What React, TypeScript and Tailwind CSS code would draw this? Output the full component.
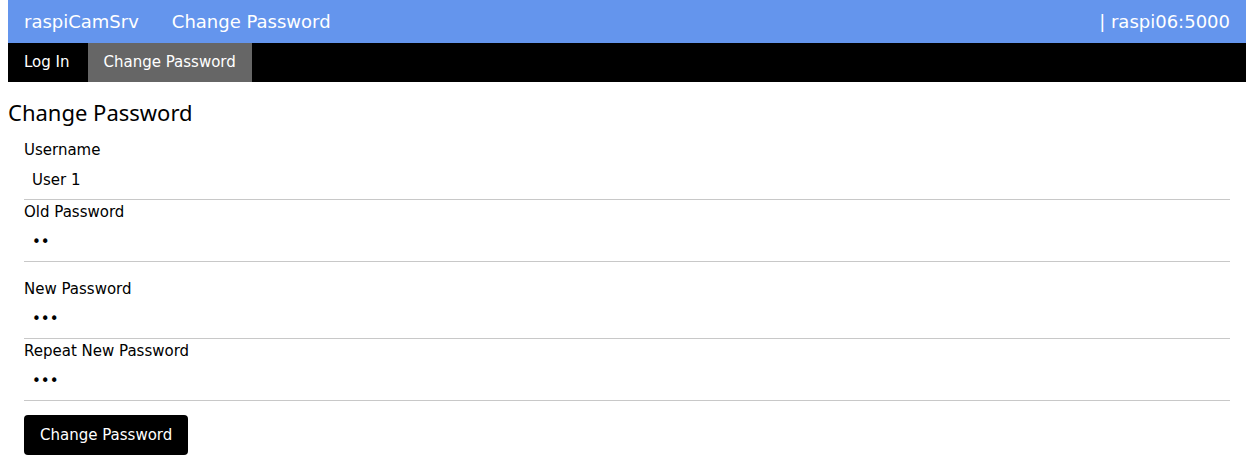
import React from 'react';

const verdana = { fontFamily: '"DejaVu Sans", Verdana, sans-serif' };

const fields = [
  { label: 'Username', value: 'User 1', type: 'text', spacer: 'mt-[2px]' },
  { label: 'Old Password', value: 'ab', type: 'password', spacer: 'mt-[2px]' },
  { label: 'New Password', value: 'abc', type: 'password', spacer: 'mt-[17px]' },
  { label: 'Repeat New Password', value: 'abc', type: 'password', spacer: 'mt-[2px]' },
];

const App: React.FC = () => {
  return (
    <div className="min-h-screen bg-white pl-2 pr-[6px] font-['DejaVu_Sans',sans-serif]">
      <header className="h-[43px] bg-[#6495ed] flex items-center pl-4 pr-4 text-white text-[18px]">
        <span>raspiCamSrv</span>
        <span className="ml-[33px]">Change Password</span>
        <span className="ml-auto">| raspi06:5000</span>
      </header>
      <nav className="h-[39px] bg-black flex text-white text-[15px]">
        <a className="pl-4 pr-[18px] flex items-center">Log In</a>
        <a className="px-4 flex items-center bg-[#666666]">Change Password</a>
      </nav>

      <h2 className="mt-[15px] text-[22px] leading-[30px] text-black font-['Noto_Sans',sans-serif]">Change Password</h2>

      <form className="pl-4 pr-4 pt-[11px]" onSubmit={e => e.preventDefault()}>
        {fields.map(f => (
          <div key={f.label} className={f.spacer}>
            <label className="block text-[15px] leading-[20px] text-black" style={verdana}>{f.label}</label>
            <input
              type={f.type}
              defaultValue={f.value}
              className="block w-full h-[40px] px-2 text-[15px] text-black border-0 border-b border-[#c8c8c8] outline-none bg-white"
              style={verdana}
            />
          </div>
        ))}
        <button className="mt-[14px] h-10 px-4 bg-black text-white text-[15px] rounded-[4px]" style={verdana}>
          Change Password
        </button>
      </form>
    </div>
  );
};

export default App;
